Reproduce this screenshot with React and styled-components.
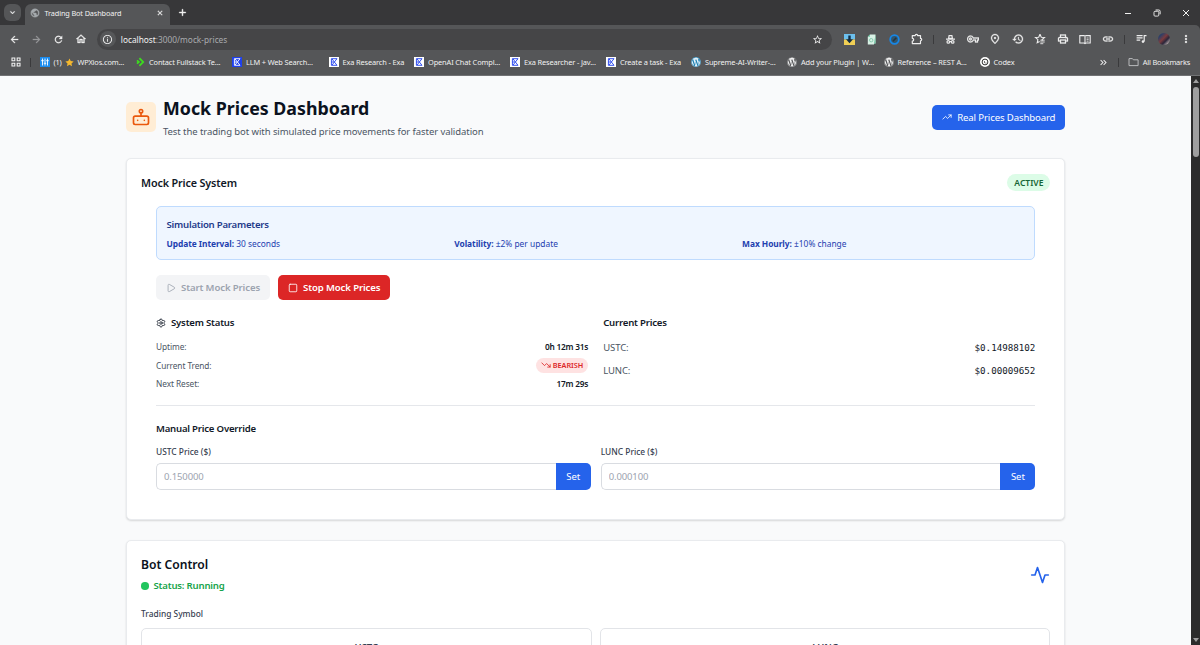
import React from 'react';
import styled, { createGlobalStyle } from 'styled-components';
import {
  MdArrowBack, MdArrowForward, MdRefresh, MdOutlineHome, MdInfoOutline, MdStarOutline,
  MdHistory, MdLink, MdMoreVert, MdOutlinePrint,
  MdOutlineVpnKey, MdOutlinePlace, MdKeyboardDoubleArrowRight, MdClose,
  MdAdd, MdExpandMore, MdPublic,
} from 'react-icons/md';
import { FaWordpress } from 'react-icons/fa';
import { TrendingUp, TrendingDown, Play, Square, Settings } from 'lucide-react';

const GlobalStyle = createGlobalStyle`
  * { box-sizing: border-box; }
  body {
    margin: 0;
    overflow: hidden;
    font-family: "Noto Sans", "Open Sans", sans-serif;
    font-size: 9.5px;
    color: #111827;
  }
  h1, h2, h3, h4, p { margin: 0; }
  button, input { font-family: inherit; margin: 0; }
  svg { display: block; flex: none; }
`;

const Window = styled.div`
  width: 1200px;
  height: 645px;
  display: flex;
  flex-direction: column;
  overflow: hidden;
  background: #373739;
`;

/* browser chrome */

const TabStrip = styled.div`
  height: 25px;
  flex: none;
  display: flex;
  align-items: flex-end;
  padding-left: 4px;
  color: #f1f1f1;

  svg path:not([fill="none"]) { stroke-width: 1; }
`;

const TabSearch = styled.div`
  width: 17px;
  height: 17px;
  margin-bottom: 4px;
  border-radius: 6px;
  background: #555658;
  display: flex;
  align-items: center;
  justify-content: center;
`;

const Tab = styled.div`
  width: 145px;
  height: 21px;
  margin-left: 4px;
  padding: 0 6px 4px 5px;
  border-radius: 6px 6px 0 0;
  background: #555658;
  display: flex;
  align-items: center;
  gap: 4.5px;
  font-size: 7.3px;
  letter-spacing: -0.12px;
`;

const TabTitle = styled.span`
  flex: 1;
  white-space: nowrap;
`;

const NewTab = styled.div`
  height: 25px;
  margin-left: 7px;
  display: flex;
  align-items: center;
`;

const WindowButtons = styled.div`
  height: 25px;
  margin-left: auto;
  padding-right: 10px;
  display: flex;
  align-items: center;
  gap: 21px;
`;

const Toolbar = styled.div`
  height: 28px;
  flex: none;
  display: flex;
  align-items: center;
  padding: 0 2px 0 3px;
  background: #555658;
  border-top-right-radius: 5px;
  color: #ededed;
`;

const ToolIcon = styled.div`
  width: ${(props) => props.$width || 22.5}px;
  height: 22px;
  display: flex;
  align-items: center;
  justify-content: center;
  color: ${(props) => (props.$dim ? '#98999b' : 'inherit')};

  svg[stroke-width="0"] path:not([fill="none"]) { stroke-width: 0.6; }
`;

const AddressBar = styled.div`
  width: 735px;
  height: 21px;
  margin: 0 6px 0 5px;
  padding: 0 9px 0 3px;
  border-radius: 11px;
  background: #454547;
  display: flex;
  align-items: center;
  gap: 5px;
  color: #a9abae;
  font-size: 8.3px;

  b { font-weight: 400; color: #f1f1f1; }
  span { flex: 1; }
`;

const SiteInfo = styled.div`
  width: 16px;
  height: 16px;
  border-radius: 50%;
  background: #565759;
  display: flex;
  align-items: center;
  justify-content: center;
  color: #ededed;
`;

const ToolDivider = styled.div`
  width: 1px;
  height: 9px;
  margin: 0 ${(props) => props.$gap || 5}px;
  background: #3a3a3c;
`;

const Avatar = styled.div`
  width: 12px;
  height: 12px;
  border-radius: 50%;
  background: linear-gradient(135deg, #2b3f68 20%, #7b3b3e 45%, #29253a 65%, #c9b9b8 90%);
`;

const BookmarkBar = styled.div`
  height: 23px;
  flex: none;
  display: flex;
  align-items: center;
  padding: 0 10px 4px 11px;
  background: #555658;
  border-bottom: 1px solid #717274;
  color: #f1f1f1;
  font-size: 7.4px;
`;

const Bookmark = styled.div`
  width: ${(props) => props.$width}px;
  flex: none;
  display: flex;
  align-items: center;
  gap: ${(props) => props.$gap || 4}px;
  white-space: nowrap;
  letter-spacing: -0.13px;
`;

const BookmarkEnd = styled.div`
  margin-left: auto;
  display: flex;
  align-items: center;
  gap: 4px;
  white-space: nowrap;
  letter-spacing: -0.2px;
`;

/* page */

const Viewport = styled.div`
  flex: 1;
  min-height: 0;
  display: flex;
`;

const Page = styled.main`
  flex: 1;
  padding: 20px 125.6px 0 126px;
  background: #f9fafb;
  overflow: hidden;
`;

const ScrollBar = styled.div`
  width: 9px;
  flex: none;
  display: flex;
  flex-direction: column;
  align-items: center;
  justify-content: space-between;
  padding: 3px 0 3px;
  background: #2c2c2c;
`;

const ScrollThumb = styled.div`
  width: 6px;
  height: 70px;
  margin: 4px 0 auto;
  border-radius: 3px;
  background: #9f9f9f;
`;

const PageHeader = styled.header`
  height: 42px;
  display: flex;
  align-items: center;
  margin-bottom: 20px;
`;

const LogoBox = styled.div`
  width: 30px;
  height: 30px;
  margin-right: 7px;
  border-radius: 5px;
  background: #ffedd5;
  color: #ea580c;
  display: flex;
  align-items: center;
  justify-content: center;
`;

const PageTitle = styled.h1`
  padding-top: 1px;
  font-size: 17.8px;
  line-height: 23px;
  font-weight: 700;
  color: #0b1220;
`;

const PageSubtitle = styled.p`
  margin-top: 4px;
  line-height: 15px;
  letter-spacing: -0.07px;
  color: #4b5563;
`;

const Button = styled.button`
  height: 25px;
  padding: 0 10px;
  border: none;
  border-radius: 5px;
  display: flex;
  align-items: center;
  gap: 5px;
  white-space: nowrap;
  font-size: 9.6px;
  font-weight: ${(props) => (props.$link ? 400 : 600)};
  letter-spacing: -0.12px;
  color: ${(props) => props.$color || 'white'};
  background: ${(props) => props.$bg || '#2563eb'};
  margin-left: ${(props) => (props.$link ? 'auto' : 0)};
`;

const Card = styled.section`
  height: ${(props) => props.$height}px;
  margin-bottom: 20px;
  padding: 14px 14px 0;
  border: 1px solid #e9ebee;
  border-radius: 5px;
  background: white;
  box-shadow: 0 1px 2px rgba(0, 0, 0, 0.14);
`;

const CardHeader = styled.div`
  display: flex;
  align-items: center;
  justify-content: space-between;
`;

const CardTitle = styled.h2`
  padding-top: 2px;
  font-size: 10.8px;
  line-height: 16px;
  font-weight: 600;
  letter-spacing: -0.15px;
`;

const ActiveBadge = styled.span`
  height: 17px;
  padding: 0 7px;
  border-radius: 9px;
  background: #dcfce7;
  color: #166534;
  font-size: 8.5px;
  line-height: 17px;
  font-weight: 600;
`;

const CardBody = styled.div`
  padding: 15px 15px 0;
`;

const InfoBox = styled.div`
  height: 54px;
  padding: 10px 9.5px;
  border: 1px solid #bfdbfe;
  border-radius: 5px;
  background: #eff6ff;
`;

const InfoTitle = styled.h3`
  font-size: 9.6px;
  line-height: 15px;
  font-weight: 600;
  letter-spacing: -0.23px;
  color: #1e3a8a;
`;

const InfoGrid = styled.div`
  display: grid;
  grid-template-columns: repeat(3, 1fr);
  column-gap: 5px;
  margin-top: 5px;
  font-size: 8.4px;
  line-height: 13px;
  color: #1e40af;

  strong { font-weight: 700; letter-spacing: -0.06px; }
`;

const ButtonRow = styled.div`
  display: flex;
  gap: 8px;
  margin: 15px 0;
`;

const TwoColumns = styled.div`
  display: grid;
  grid-template-columns: 1fr 1fr;
  column-gap: ${(props) => props.$gap}px;
`;

const SectionTitle = styled.h3`
  display: flex;
  align-items: center;
  gap: 5px;
  font-size: 9.6px;
  line-height: 16px;
  font-weight: 600;
  letter-spacing: -0.21px;
  margin-bottom: ${(props) => props.$space}px;
`;

const StatusRow = styled.div`
  display: flex;
  align-items: center;
  justify-content: space-between;
  height: 18.7px;
  font-size: 8.3px;
  letter-spacing: -0.08px;
  color: #4b5563;

  b { font-weight: 600; letter-spacing: -0.22px; color: #111827; }
`;

const TrendBadge = styled.span`
  height: 15px;
  padding: 0 5px;
  border-radius: 8px;
  background: #fee2e2;
  color: #dc2626;
  display: flex;
  align-items: center;
  gap: 1.5px;
  font-size: 7.3px;
  font-weight: 600;
  letter-spacing: -0.05px;
`;

const PriceRow = styled.div`
  display: flex;
  align-items: center;
  justify-content: space-between;
  height: 22.5px;
  color: #4b5563;

  span:first-child { letter-spacing: -0.1px; }

  span:last-child {
    font-family: "DejaVu Sans Mono", monospace;
    font-size: 9.2px;
    color: #111827;
  }
`;

const Divider = styled.hr`
  height: 1px;
  margin: 12px 0 15px;
  border: none;
  background: #e5e7eb;
`;

const Label = styled.label`
  display: block;
  font-size: 8.4px;
  line-height: 13px;
  font-weight: 500;
  color: #374151;
`;

const InputGroup = styled.div`
  height: 26.5px;
  margin-top: 5px;
  display: flex;
`;

const PriceInput = styled.input`
  flex: 1;
  min-width: 0;
  padding: 0 7px;
  border: 1px solid #d9dce1;
  border-right: none;
  border-radius: 5px 0 0 5px;
  outline: none;
  font-size: 9.5px;
  letter-spacing: -0.13px;

  &::placeholder { color: #9ca3af; opacity: 1; }
`;

const SetButton = styled.button`
  width: 35px;
  border: none;
  border-radius: 0 5px 5px 0;
  background: #2563eb;
  color: white;
  font-size: 9.5px;
`;

const BotTitle = styled.h2`
  padding-top: 1px;
  font-size: 12.1px;
  line-height: 17px;
  font-weight: 600;
  color: #0b1220;
`;

const BotStatus = styled.p`
  display: flex;
  align-items: center;
  gap: 5px;
  margin-top: 5px;
  line-height: 16px;
  font-size: 9.6px;
  font-weight: 600;
  letter-spacing: -0.2px;
  color: #16a34a;

  &::before {
    content: "";
    width: 7.5px;
    height: 7.5px;
    border-radius: 50%;
    background: #22c55e;
  }
`;

const SymbolPicker = styled.div`
  padding-top: 13px;

  label { margin-bottom: 8px; }
`;

const SymbolOption = styled.div`
  height: 40px;
  padding-top: 10px;
  border: 1.5px solid #e2e4e8;
  border-radius: 5px;
  text-align: center;
  font-weight: 600;
  line-height: 16px;
  color: #374151;
`;

const BotIcon = () => (
  <svg width="20" height="20" viewBox="0 0 24 24" fill="none" stroke="currentColor" strokeWidth="2" strokeLinecap="round" strokeLinejoin="round">
    <rect x="3" y="11" width="18" height="10" rx="2" />
    <circle cx="12" cy="5" r="2" />
    <path d="M12 7v4M8 16h.01M16 16h.01" />
  </svg>
);

const ActivityIcon = () => (
  <svg width="20" height="20" viewBox="0 0 24 24" fill="none" stroke="#2563eb" strokeWidth="2" strokeLinecap="round" strokeLinejoin="round">
    <path d="M22 12h-4l-3 9L9 3l-3 9H2" />
  </svg>
);

const ExaIcon = ({ inverted }) => (
  <svg width="10" height="10" viewBox="0 0 10 10">
    <rect width="10" height="10" fill={inverted ? '#1f40ed' : '#fff'} />
    <path d="M8 1.7H2.4v6.6H8M2.4 5h2.4M3 1.9L5.4 5 3 8.1M8 1.7L5.4 5 8 8.3" fill="none" stroke={inverted ? '#fff' : '#1f40ed'} strokeWidth="0.9" />
  </svg>
);

const SlidersIcon = () => (
  <svg width="10" height="10" viewBox="0 0 10 10">
    <rect width="10" height="10" fill="#1a8cf0" />
    <path d="M2.5 1.5v7M5 1.5v7M7.5 1.5v7M1.2 3.7h2.6M3.8 6.3h2.4M6.2 3.7h2.6" stroke="#fff" strokeWidth="0.9" />
  </svg>
);

const ContactIcon = () => (
  <svg width="9" height="10" viewBox="0 0 9 10" fill="none" stroke="#3ddc1f" strokeWidth="1.8">
    <path d="M3.4 1.2L7.2 5 3.4 8.8" />
    <path d="M1 3.4L2.8 5 1 6.6" />
  </svg>
);

const YellowStar = () => (
  <svg width="9" height="9" viewBox="0 0 24 24" fill="#f5b82e">
    <path d="M12 1l3.3 7.2 7.7.9-5.7 5.3 1.5 7.8-6.8-3.9-6.8 3.9 1.5-7.8L1 9.1l7.7-.9z" />
  </svg>
);

const AppsIcon = () => (
  <svg width="10" height="10" viewBox="0 0 10 10" fill="none" stroke="currentColor" strokeWidth="1.1">
    <path d="M1 1h2.8v2.8H1zM6.2 1H9v2.8H6.2zM1 6.2h2.8V9H1zM6.2 6.2H9V9H6.2z" />
  </svg>
);

const CodexIcon = () => (
  <svg width="10" height="10" viewBox="0 0 10 10">
    <circle cx="5" cy="5" r="5" fill="#fff" />
    <circle cx="5" cy="5" r="2.9" fill="none" stroke="#333" strokeWidth="1" />
    <path d="M4 4l1 1-1 1M5.3 6h1.2" fill="none" stroke="#333" strokeWidth="0.7" />
  </svg>
);

const WordPressBlue = () => (
  <svg width="10" height="10" viewBox="0 0 512 512">
    <circle cx="256" cy="256" r="250" fill="#1d7fb2" />
    <FaWordpress size={512} color="#e6f3fa" />
  </svg>
);

const DownloadExt = () => (
  <svg width="11" height="11" viewBox="0 0 11 11">
    <rect width="11" height="5.5" fill="#6cc0ee" />
    <rect y="5.5" width="11" height="5.5" fill="#f0cf55" />
    <path d="M4.3 1.5h2.4v3.7H9L5.5 9.3 2 5.2h2.3z" fill="#122d45" />
  </svg>
);

const DocExt = () => (
  <svg width="9" height="11" viewBox="0 0 9 11">
    <path d="M3 .5h5.5v9H7v1H.8V2.7z" fill="#d8f1e5" />
    <path d="M3 .5v2.2H.8zM7 9.5h1.5v-9" fill="#6cc5a2" />
    <circle cx="4.2" cy="6.2" r="1.7" fill="none" stroke="#7fc4a9" strokeWidth="0.9" />
  </svg>
);

const RingExt = () => (
  <svg width="11" height="11" viewBox="0 0 11 11">
    <circle cx="5.5" cy="5.5" r="4.3" fill="#31566e" stroke="#1687e8" strokeWidth="1.8" />
    <path d="M4 7.3L7.2 3.8" stroke="#26353e" strokeWidth="1.6" />
  </svg>
);

const PuzzleIcon = () => (
  <svg width="12" height="12" viewBox="0 0 12 12" fill="none" stroke="currentColor" strokeWidth="1.2" strokeLinejoin="round">
    <path d="M1.3 2.6h2.9a1.2 1.2 0 0 1 2.4 0h2.9v2.8a1.2 1.2 0 0 1 0 2.4v2.8H1.3V8.1a1.3 1.3 0 0 0 0-2.8z" />
  </svg>
);

const IncognitoIcon = () => (
  <svg width="11" height="11" viewBox="0 0 11 11" fill="none" stroke="currentColor" strokeWidth="1.2">
    <path d="M3.6 4.4L4.1 1.7h2.8l.5 2.7zM1 5.2h9" />
    <circle cx="3.3" cy="7.9" r="1.3" />
    <circle cx="7.7" cy="7.9" r="1.3" />
    <path d="M4.6 7.6h1.8" />
  </svg>
);

const StarListIcon = () => (
  <svg width="12" height="12" viewBox="0 0 12 12" fill="none" stroke="currentColor" strokeWidth="1.1">
    <path d="M6 1.3l1.3 2.9 3.2.3-2.4 2.1.3 1.1M6 1.3L4.7 4.2l-3.2.3 2.4 2.1-.7 3.1L5.6 8.4" />
    <path d="M6.3 7.2h4.4M6.3 9h4.4M6.3 10.7h3" strokeWidth="0.9" />
  </svg>
);

const ReaderIcon = () => (
  <svg width="12" height="11" viewBox="0 0 12 11" fill="none" stroke="currentColor" strokeWidth="1.1">
    <path d="M.8 1.6H5l1 .7 1-.7h4.2V9H7l-1 .7L5 9H.8zM6 2.3v7.4" />
    <path d="M7.6 4h2M7.6 5.6h2M7.6 7.2h2" strokeWidth="0.8" />
  </svg>
);

const MediaIcon = () => (
  <svg width="12" height="12" viewBox="0 0 12 12" fill="none" stroke="currentColor" strokeWidth="1.2">
    <path d="M1.6 2.7h6M1.6 4.9h6M1.6 7.1h3.6M9.2 8.6V2.7h2.3" />
    <circle cx="8" cy="8.6" r="1.3" fill="currentColor" stroke="none" />
  </svg>
);

const FolderIcon = () => (
  <svg width="11" height="10" viewBox="0 0 11 10" fill="none" stroke="#c4c5c7" strokeWidth="0.9" strokeLinejoin="round">
    <path d="M1 1.6h3.4l1 1.2h4.7v5.8H1z" />
  </svg>
);

const BOOKMARKS = [
  { label: 'Contact Fullstack Te...', icon: <ContactIcon />, width: 96 },
  { label: 'LLM + Web Search...', icon: <ExaIcon inverted />, width: 96.5 },
  { label: 'Exa Research - Exa', icon: <ExaIcon />, width: 85.5 },
  { label: 'OpenAI Chat Compl...', icon: <ExaIcon />, width: 96 },
  { label: 'Exa Researcher - Jav...', icon: <ExaIcon />, width: 96 },
  { label: 'Create a task - Exa', icon: <ExaIcon />, width: 85 },
  { label: 'Supreme-AI-Writer-...', icon: <WordPressBlue />, width: 96 },
  { label: 'Add your Plugin | W...', icon: <FaWordpress size={10} />, width: 96.5 },
  { label: 'Reference – REST A...', icon: <FaWordpress size={10} />, width: 96 },
  { label: 'Codex', icon: <CodexIcon />, width: 60 },
];

const BrowserChrome = () => (
  <>
    <TabStrip>
      <TabSearch><MdExpandMore size={9} /></TabSearch>
      <Tab>
        <MdPublic size={10} color="#a4a9ad" />
        <TabTitle>Trading Bot Dashboard</TabTitle>
        <MdClose size={8} />
      </Tab>
      <NewTab><MdAdd size={11} /></NewTab>
      <WindowButtons>
        <svg width="8" height="8" viewBox="0 0 8 8" stroke="currentColor"><path d="M1 4.5h6" /></svg>
        <svg width="8" height="8" viewBox="0 0 8 8" fill="none" stroke="currentColor" strokeWidth="0.9">
          <rect x="1" y="2.3" width="4.8" height="4.8" rx="1" />
          <path d="M2.6 1h3.2a1.3 1.3 0 0 1 1.3 1.3v3" />
        </svg>
        <svg width="8" height="8" viewBox="0 0 8 8" stroke="currentColor" strokeWidth="0.9"><path d="M1 1l6 6M7 1L1 7" /></svg>
      </WindowButtons>
    </TabStrip>
    <Toolbar>
      <ToolIcon $width={22.2}><MdArrowBack size={11} /></ToolIcon>
      <ToolIcon $width={22.2} $dim><MdArrowForward size={11} /></ToolIcon>
      <ToolIcon $width={22.2}><MdRefresh size={11} /></ToolIcon>
      <ToolIcon $width={22.2}><MdOutlineHome size={12} /></ToolIcon>
      <AddressBar>
        <SiteInfo><MdInfoOutline size={11} /></SiteInfo>
        <span><b>localhost</b>:3000/mock-prices</span>
        <MdStarOutline size={11} color="#ededed" />
      </AddressBar>
      <ToolIcon><DownloadExt /></ToolIcon>
      <ToolIcon><DocExt /></ToolIcon>
      <ToolIcon><RingExt /></ToolIcon>
      <ToolIcon><PuzzleIcon /></ToolIcon>
      <ToolDivider />
      <ToolIcon><IncognitoIcon /></ToolIcon>
      <ToolIcon><MdOutlineVpnKey size={12} /></ToolIcon>
      <ToolIcon><MdOutlinePlace size={12} /></ToolIcon>
      <ToolIcon><MdHistory size={12} /></ToolIcon>
      <ToolIcon><StarListIcon /></ToolIcon>
      <ToolIcon><MdOutlinePrint size={12} /></ToolIcon>
      <ToolIcon><ReaderIcon /></ToolIcon>
      <ToolIcon><MdLink size={12} /></ToolIcon>
      <ToolDivider />
      <ToolIcon><MediaIcon /></ToolIcon>
      <ToolIcon><Avatar /></ToolIcon>
      <ToolIcon><MdMoreVert size={12} /></ToolIcon>
    </Toolbar>
    <BookmarkBar>
      <AppsIcon />
      <ToolDivider $gap={9} />
      <Bookmark $width={96} $gap={3.4}>
        <SlidersIcon />
        <span>(1)</span>
        <YellowStar />
        <span>WPXios.com...</span>
      </Bookmark>
      {BOOKMARKS.map((item) => (
        <Bookmark key={item.label} $width={item.width}>
          {item.icon}
          <span>{item.label}</span>
        </Bookmark>
      ))}
      <BookmarkEnd>
        <MdKeyboardDoubleArrowRight size={11} />
        <ToolDivider $gap={5} />
        <FolderIcon />
        <span>All Bookmarks</span>
      </BookmarkEnd>
    </BookmarkBar>
  </>
);

const MockPriceCard = () => (
  <Card $height={362}>
    <CardHeader>
      <CardTitle>Mock Price System</CardTitle>
      <ActiveBadge>ACTIVE</ActiveBadge>
    </CardHeader>
    <CardBody>
      <InfoBox>
        <InfoTitle>Simulation Parameters</InfoTitle>
        <InfoGrid>
          <div><strong>Update Interval:</strong> 30 seconds</div>
          <div><strong>Volatility:</strong> ±2% per update</div>
          <div><strong>Max Hourly:</strong> ±10% change</div>
        </InfoGrid>
      </InfoBox>
      <ButtonRow>
        <Button $bg="#f3f4f6" $color="#9ca3af"><Play size={10} />Start Mock Prices</Button>
        <Button $bg="#dc2626"><Square size={10} />Stop Mock Prices</Button>
      </ButtonRow>
      <TwoColumns $gap={15}>
        <div>
          <SectionTitle $space={6}><Settings size={10} />System Status</SectionTitle>
          <StatusRow><span>Uptime:</span><b>0h 12m 31s</b></StatusRow>
          <StatusRow>
            <span>Current Trend:</span>
            <TrendBadge><TrendingDown size={10} />BEARISH</TrendBadge>
          </StatusRow>
          <StatusRow><span>Next Reset:</span><b>17m 29s</b></StatusRow>
        </div>
        <div>
          <SectionTitle $space={5.5}>Current Prices</SectionTitle>
          <PriceRow><span>USTC:</span><span>$0.14988102</span></PriceRow>
          <PriceRow><span>LUNC:</span><span>$0.00009652</span></PriceRow>
        </div>
      </TwoColumns>
      <Divider />
      <SectionTitle $space={8}>Manual Price Override</SectionTitle>
      <TwoColumns $gap={10}>
        <div>
          <Label>USTC Price ($)</Label>
          <InputGroup>
            <PriceInput placeholder="0.150000" />
            <SetButton>Set</SetButton>
          </InputGroup>
        </div>
        <div>
          <Label>LUNC Price ($)</Label>
          <InputGroup>
            <PriceInput placeholder="0.000100" />
            <SetButton>Set</SetButton>
          </InputGroup>
        </div>
      </TwoColumns>
    </CardBody>
  </Card>
);

const BotControlCard = () => (
  <Card $height={200}>
    <CardHeader>
      <div>
        <BotTitle>Bot Control</BotTitle>
        <BotStatus>Status: Running</BotStatus>
      </div>
      <ActivityIcon />
    </CardHeader>
    <SymbolPicker>
      <Label>Trading Symbol</Label>
      <TwoColumns $gap={8}>
        <SymbolOption>USTC</SymbolOption>
        <SymbolOption>LUNC</SymbolOption>
      </TwoColumns>
    </SymbolPicker>
  </Card>
);

const App = () => {
  return (
    <Window>
      <GlobalStyle />
      <BrowserChrome />
      <Viewport>
        <Page>
          <PageHeader>
            <LogoBox><BotIcon /></LogoBox>
            <div>
              <PageTitle>Mock Prices Dashboard</PageTitle>
              <PageSubtitle>Test the trading bot with simulated price movements for faster validation</PageSubtitle>
            </div>
            <Button $link><TrendingUp size={10} />Real Prices Dashboard</Button>
          </PageHeader>
          <MockPriceCard />
          <BotControlCard />
        </Page>
        <ScrollBar>
          <svg width="6" height="4" viewBox="0 0 6 4" fill="#9f9f9f"><path d="M3 0l3 4H0z" /></svg>
          <ScrollThumb />
          <svg width="6" height="4" viewBox="0 0 6 4" fill="#9f9f9f"><path d="M0 0h6L3 4z" /></svg>
        </ScrollBar>
      </Viewport>
    </Window>
  );
};

export default App;
